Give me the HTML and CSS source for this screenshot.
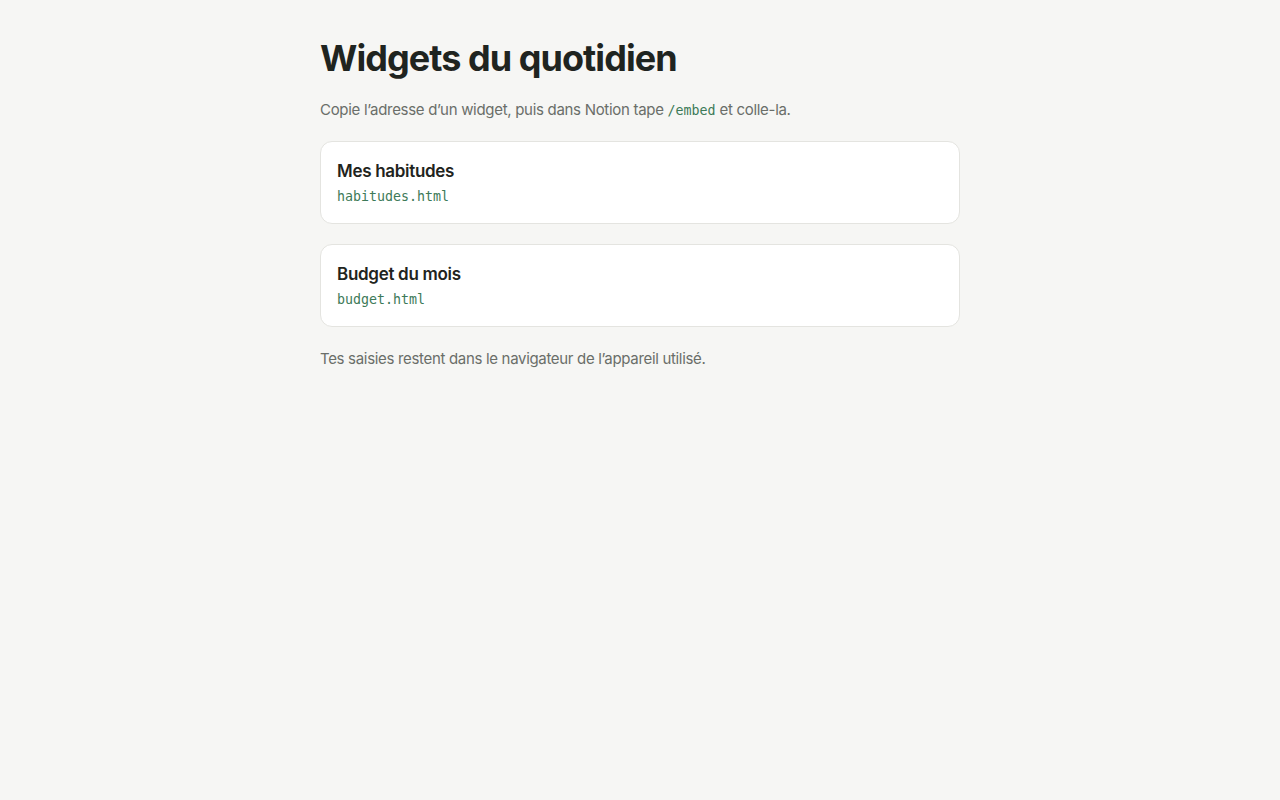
FILE: index.html
```html
<!DOCTYPE html>
<html lang="fr">
<head>
<meta charset="utf-8">
<title>Widgets du quotidien</title>
<link rel="stylesheet" href="styles.css">
</head>
<body>
<main class="page">
  <h1 class="title">Widgets du quotidien</h1>
  <p class="intro">Copie l’adresse d’un widget, puis dans Notion tape <code class="code">/embed</code> et colle-la.</p>
  <div class="cards">
    <a class="card" href="habitudes.html">
      <span class="card-title">Mes habitudes</span>
      <span class="card-url">habitudes.html</span>
    </a>
    <a class="card" href="budget.html">
      <span class="card-title">Budget du mois</span>
      <span class="card-url">budget.html</span>
    </a>
  </div>
  <p class="note">Tes saisies restent dans le navigateur de l’appareil utilisé.</p>
</main>
</body>
</html>
```
FILE: styles.css
```css
* { box-sizing: border-box; }
html, body { margin: 0; padding: 0; }
body {
  background: #f6f6f4;
  color: #1f2420;
  font-family: Inter, "Noto Sans", sans-serif;
}
.page {
  width: 640px;
  margin: 0 auto;
  padding-top: 36px;
}
.title {
  margin: 0;
  font-size: 36px;
  line-height: 44px;
  font-weight: 700;
  letter-spacing: -0.95px;
  color: #1f2420;
}
.intro {
  margin: 18px 0 0;
  font-size: 15px;
  line-height: 24px;
  letter-spacing: -0.3px;
  color: #6a6e69;
}
.code {
  font-family: "DejaVu Sans Mono", "Liberation Mono", monospace;
  font-size: 13.3px;
  letter-spacing: 0;
  color: #3d7a58;
}
.cards {
  display: flex;
  flex-direction: column;
  gap: 20px;
  margin-top: 18px;
}
.card {
  display: flex;
  flex-direction: column;
  gap: 5px;
  height: 83px;
  padding: 17px 16px 0;
  background: #ffffff;
  border: 1px solid #e4e4e0;
  border-radius: 12px;
  text-decoration: none;
}
.card-title {
  font-size: 17px;
  line-height: 24px;
  font-weight: 600;
  letter-spacing: -0.3px;
  color: #1f2420;
}
.card-url {
  font-family: "DejaVu Sans Mono", "Liberation Mono", monospace;
  font-size: 13.3px;
  line-height: 18px;
  color: #3d7a58;
}
.note {
  margin: 20px 0 0;
  font-size: 15px;
  line-height: 24px;
  letter-spacing: -0.32px;
  color: #6a6e69;
}
```
